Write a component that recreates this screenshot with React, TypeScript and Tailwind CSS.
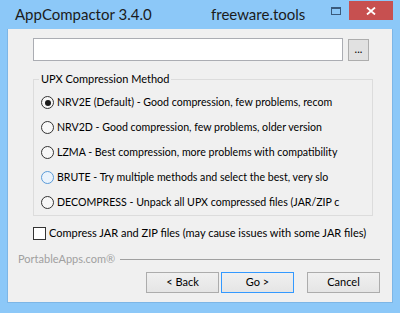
import { useState } from 'react';

const methods = [
  { id: 'nrv2e', label: 'NRV2E (Default) - Good compression, few problems, recom' },
  { id: 'nrv2d', label: 'NRV2D - Good compression, few problems, older version' },
  { id: 'lzma', label: 'LZMA - Best compression, more problems with compatibility' },
  { id: 'brute', label: 'BRUTE - Try multiple methods and select the best, very slo' },
  { id: 'decompress', label: 'DECOMPRESS - Unpack all UPX compressed files (JAR/ZIP c' },
];

export default function App() {
  const [method, setMethod] = useState('nrv2e');
  const [jar, setJar] = useState(false);

  return (
    <div
      className="w-[400px] h-[313px] bg-[#8cc8f8] flex flex-col text-black overflow-hidden"
      style={{ fontFamily: 'Lato, "Open Sans", sans-serif' }}
    >
      {/* title bar */}
      <div className="h-[29px] flex items-start shrink-0">
        <span className="ml-[15px] mt-[4px] w-[196px] text-[15px] leading-[20px] text-[#1b1b1b]">
          AppCompactor 3.4.0
        </span>
        <span className="mt-[4px] text-[15px] leading-[20px] text-[#1b1b1b]">freeware.tools</span>
        <div className="ml-auto flex items-start">
          <div className="mt-[7px] mr-[8px] w-[10px] h-[8px] border border-t-2 border-[#3a5a7c]" />
          <div className="mt-[1px] mr-[7px] w-[44px] h-[19px] bg-[#c75050] flex items-center justify-center">
            <svg width="10" height="8" viewBox="0 0 10 8">
              <path d="M1 0.5 L9 7.5 M9 0.5 L1 7.5" stroke="#fff" strokeWidth="1.8" />
            </svg>
          </div>
        </div>
      </div>

      {/* client area */}
      <div className="mx-[7px] h-[274px] bg-[#f0f0f0] border-l border-r border-b border-[#7db6e6] flex flex-col text-[11px]">
        <div className="pt-[9px] pl-[25px] flex items-start gap-[5px]">
          <div className="w-[310px] h-[23px] bg-white border border-[#abadb3]" />
          <button className="mt-[1px] w-[21px] h-[22px] bg-[#e1e1e1] border border-[#adadad] flex items-center justify-center leading-none pb-[3px]">
            ...
          </button>
        </div>

        <fieldset className="mt-[11px] ml-[25px] w-[340px] border border-[#dcdcdc] pl-[7px] pt-[4px]">
          <legend className="-ml-[2px] px-[2px] leading-[14px]">UPX Compression Method</legend>
          {methods.map((m) => {
            const on = method === m.id;
            const hover = m.id === 'brute';
            return (
              <label
                key={m.id}
                onClick={() => setMethod(m.id)}
                className="h-[25px] w-[320px] flex items-center gap-[3px] whitespace-nowrap text-[10.6px] cursor-default"
              >
                <span
                  className={
                    'shrink-0 w-[13px] h-[13px] rounded-full border flex items-center justify-center ' +
                    (hover ? 'border-[#5b9bd8] bg-[#eaf3fc]' : 'border-[#333333] bg-[#f7f7f7]')
                  }
                >
                  {on && <span className="w-[6px] h-[6px] rounded-full bg-[#1a1a1a]" />}
                </span>
                <span>{m.label}</span>
              </label>
            );
          })}
        </fieldset>

        <label
          onClick={() => setJar(!jar)}
          className="mt-[11px] ml-[25px] h-[13px] flex items-center gap-[3px] whitespace-nowrap"
        >
          <span className="shrink-0 w-[13px] h-[13px] border border-[#333333] bg-white flex items-center justify-center text-[10px] leading-none">
            {jar ? '✓' : ''}
          </span>
          <span>Compress JAR and ZIP files (may cause issues with some JAR files)</span>
        </label>

        <div className="mt-[12px] ml-[10px] mr-[12px] h-[14px] flex items-center gap-[5px]">
          <span className="text-[#a0a0a0] whitespace-nowrap">PortableApps.com®</span>
          <div className="flex-1 h-px bg-[#a0a0a0]" />
        </div>

        <div className="mt-[6px] pr-[12px] flex justify-end">
          <button className="w-[73px] h-[21px] bg-gradient-to-b from-[#f0f0f0] to-[#e5e5e5] border border-[#acacac]">
            &lt; Back
          </button>
          <button className="ml-[2px] w-[73px] h-[21px] bg-gradient-to-b from-[#f0f0f0] to-[#e5e5e5] border border-[#3399ff]">
            Go &gt;
          </button>
          <button className="ml-[13px] w-[73px] h-[21px] bg-gradient-to-b from-[#f0f0f0] to-[#e5e5e5] border border-[#acacac]">
            Cancel
          </button>
        </div>
      </div>
    </div>
  );
}
